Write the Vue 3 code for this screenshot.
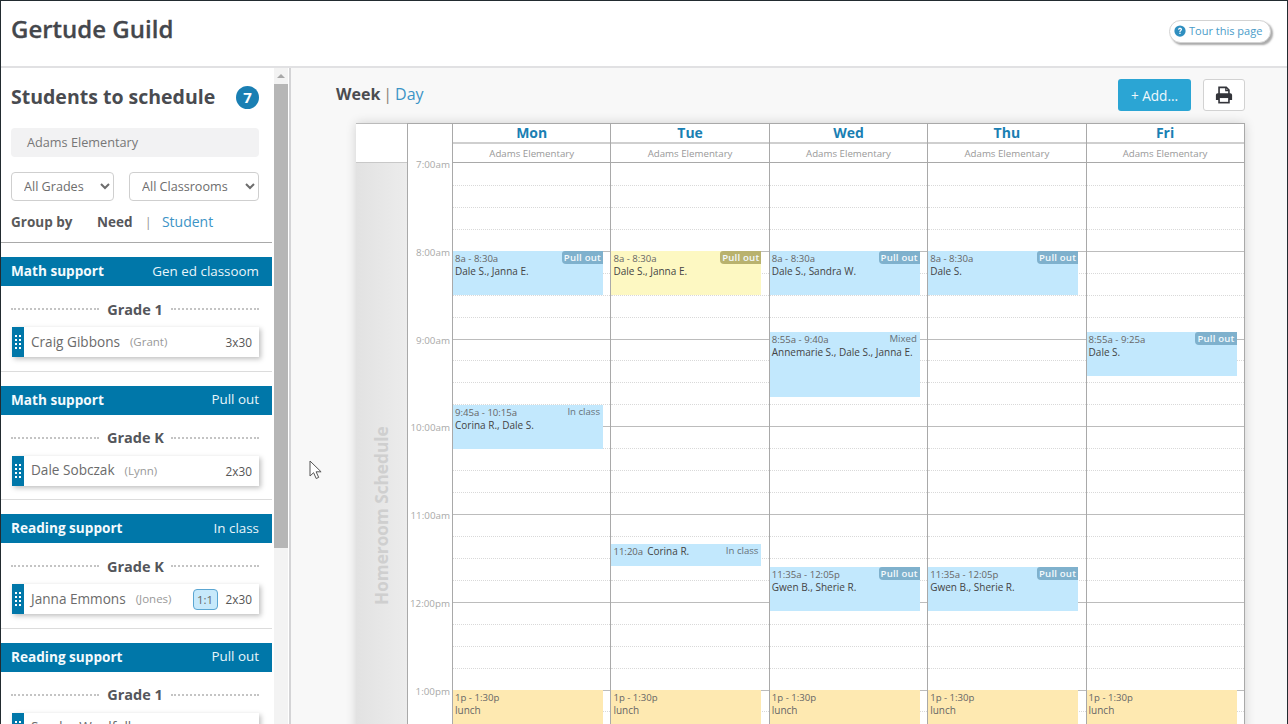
<template>
  <div class="page">
    <header class="top-bar">
      <h1 class="org-name">Gertude Guild</h1>
      <button class="tour-btn">
        <svg class="tour-icon" viewBox="0 0 16 16">
          <circle cx="8" cy="8" r="7.5" fill="#2f8fc0" />
          <path d="M5.4 6.2c0-1.5 1.2-2.4 2.7-2.4s2.6.9 2.6 2.2c0 1.9-2 1.9-2 3.2H7.1c0-2 1.9-2 1.9-3.1 0-.5-.4-.8-1-.8-.7 0-1 .4-1.1 1z" fill="#fff" />
          <rect x="7.1" y="10.2" width="1.7" height="1.8" fill="#fff" />
        </svg>
        Tour this page
      </button>
    </header>

    <div class="content">
      <aside class="sidebar">
        <div class="side-scroll">
          <div class="side-title-row">
            <h2 class="side-title">Students to schedule</h2>
            <span class="count-badge">7</span>
          </div>
          <div class="school-field">Adams Elementary</div>
          <div class="filters">
            <select class="filter grades"><option>All Grades</option></select>
            <select class="filter rooms"><option>All Classrooms</option></select>
          </div>
          <div class="group-by">
            <span class="group-label">Group by</span>
            <span class="group-on">Need</span>
            <span class="group-sep">|</span>
            <a class="group-link">Student</a>
          </div>

          <section v-for="g in groups" :key="g.need + g.place" class="need-group">
            <div class="need-head">
              <strong>{{ g.need }}</strong>
              <span>{{ g.place }}</span>
            </div>
            <div class="grade-row"><span>{{ g.grade }}</span></div>
            <div class="student-card">
              <div class="handle"><i v-for="n in 8" :key="n"></i></div>
              <span class="student-name">{{ g.name }}</span>
              <span class="student-teacher">({{ g.teacher }})</span>
              <span v-if="g.ratio" class="ratio">{{ g.ratio }}</span>
              <span class="student-time">{{ g.time }}</span>
            </div>
          </section>
        </div>
        <div class="scrollbar">
          <div class="scroll-arrow"></div>
          <div class="scroll-thumb"></div>
        </div>
      </aside>

      <main class="main">
        <div class="toolbar">
          <div class="view-switch">
            <strong>Week</strong>
            <span class="view-sep">|</span>
            <a>Day</a>
          </div>
          <div class="actions">
            <button class="add-btn">+ Add...</button>
            <button class="print-btn">
              <svg viewBox="0 0 20 20" width="18" height="18">
                <path d="M4.5 9V1.5h8l3 3V9" fill="#fff" stroke="#33343a" stroke-width="1.8" />
                <path d="M12 1.5V5h3.5" fill="none" stroke="#33343a" stroke-width="1.4" />
                <path d="M3 8h14a2 2 0 0 1 2 2v5.5h-3.5v-2h-11v2H1V10a2 2 0 0 1 2-2z" fill="#33343a" />
                <rect x="4.5" y="12.5" width="11" height="6" fill="#fff" stroke="#33343a" stroke-width="1.8" />
              </svg>
            </button>
          </div>
        </div>

        <div class="calendar">
          <div class="homeroom">
            <div class="homeroom-top"></div>
            <div class="homeroom-body"><span>Homeroom Schedule</span></div>
          </div>
          <div class="time-col">
            <div class="time-head"></div>
            <div v-for="t in hours" :key="t" class="time-cell"><span>{{ t }}</span></div>
          </div>
          <div v-for="d in days" :key="d.name" class="day-col">
            <div class="day-name">{{ d.name }}</div>
            <div class="day-school">Adams Elementary</div>
            <div class="day-grid">
              <div v-for="n in quarterCount" :key="n" class="quarter" :class="{ hour: n % 4 === 1 && n > 1 }"></div>
              <div
                v-for="e in d.events"
                :key="e.time"
                class="event"
                :class="e.color"
                :style="{ top: e.top + 'px', height: e.height + 'px' }"
              >
                <span v-if="e.tag" class="tag" :class="{ plain: e.plain }">{{ e.tag }}</span>
                <div class="event-time">{{ e.time }}<span v-if="e.inlineNames" class="inline-names">{{ e.inlineNames }}</span></div>
                <div v-if="e.names" class="event-names">{{ e.names }}</div>
              </div>
            </div>
          </div>
        </div>
      </main>
    </div>

    <svg class="cursor" viewBox="0 0 14 20" width="14" height="20">
      <path d="M1 1v15l3.6-3.3 2.6 5.8 2.5-1.1-2.6-5.6h5z" fill="#fff" stroke="#555" stroke-width="1" />
    </svg>
  </div>
</template>

<script setup>
const groups = [
  { need: 'Math support', place: 'Gen ed classoom', grade: 'Grade 1', name: 'Craig Gibbons', teacher: 'Grant', time: '3x30' },
  { need: 'Math support', place: 'Pull out', grade: 'Grade K', name: 'Dale Sobczak', teacher: 'Lynn', time: '2x30' },
  { need: 'Reading support', place: 'In class', grade: 'Grade K', name: 'Janna Emmons', teacher: 'Jones', ratio: '1:1', time: '2x30' },
  { need: 'Reading support', place: 'Pull out', grade: 'Grade 1', name: 'Sandra Woolfolk', teacher: 'Grant', time: '2x30' }
]

const hours = ['7:00am', '8:00am', '9:00am', '10:00am', '11:00am', '12:00pm', '1:00pm']
const quarterCount = 28

const lunch = { time: '1p - 1:30p', names: 'lunch', color: 'orange', top: 527, height: 44 }

const days = [
  {
    name: 'Mon',
    events: [
      { time: '8a - 8:30a', names: 'Dale S., Janna E.', tag: 'Pull out', color: 'blue', top: 88, height: 44 },
      { time: '9:45a - 10:15a', names: 'Corina R., Dale S.', tag: 'In class', plain: true, color: 'blue', top: 242, height: 44 },
      lunch
    ]
  },
  {
    name: 'Tue',
    events: [
      { time: '8a - 8:30a', names: 'Dale S., Janna E.', tag: 'Pull out', color: 'yellow', top: 88, height: 44 },
      { time: '11:20a', inlineNames: 'Corina R.', tag: 'In class', plain: true, color: 'blue', top: 381, height: 22 },
      lunch
    ]
  },
  {
    name: 'Wed',
    events: [
      { time: '8a - 8:30a', names: 'Dale S., Sandra W.', tag: 'Pull out', color: 'blue', top: 88, height: 44 },
      { time: '8:55a - 9:40a', names: 'Annemarie S., Dale S., Janna E.', tag: 'Mixed', plain: true, color: 'blue', top: 169, height: 65 },
      { time: '11:35a - 12:05p', names: 'Gwen B., Sherie R.', tag: 'Pull out', color: 'blue', top: 404, height: 44 },
      lunch
    ]
  },
  {
    name: 'Thu',
    events: [
      { time: '8a - 8:30a', names: 'Dale S.', tag: 'Pull out', color: 'blue', top: 88, height: 44 },
      { time: '11:35a - 12:05p', names: 'Gwen B., Sherie R.', tag: 'Pull out', color: 'blue', top: 404, height: 44 },
      lunch
    ]
  },
  {
    name: 'Fri',
    events: [
      { time: '8:55a - 9:25a', names: 'Dale S.', tag: 'Pull out', color: 'blue', top: 169, height: 44 },
      lunch
    ]
  }
]
</script>

<style>
html, body { margin: 0; overflow: hidden; }
</style>

<style scoped>
.page {
  height: 724px;
  box-sizing: border-box;
  border: 1px solid #222b30;
  border-bottom: none;
  display: flex;
  flex-direction: column;
  overflow: hidden;
  position: relative;
  background: #fff;
  font-family: "Open Sans", "Noto Sans", sans-serif;
  color: #555;
}

/* top bar */
.top-bar {
  height: 65px;
  flex: none;
  display: flex;
  justify-content: space-between;
  align-items: flex-start;
  padding: 0 16px 0 10px;
  border-bottom: 2px solid #e1e1e3;
}
.org-name { margin: 12px 0 0; font-size: 24px; line-height: 32px; font-weight: 600; color: #44474c; -webkit-text-stroke: 0.3px #44474c; }
.tour-btn {
  margin-top: 19px;
  height: 23px;
  width: 102px;
  box-sizing: border-box;
  padding: 0 0 2px 4px;
  display: flex;
  align-items: center;
  gap: 3px;
  background: #fff;
  border: 1px solid #d3d3d3;
  border-radius: 12px;
  box-shadow: 2px 2px 2px #aaa;
  font: 11px "Open Sans", sans-serif;
  color: #4a9cc9;
}
.tour-icon { width: 12px; height: 12px; flex: none; }

.content { flex: 1; min-height: 0; display: flex; }

/* sidebar */
.sidebar { width: 288px; flex: none; display: flex; border-right: 2px solid #d4d4d6; background: #fff; }
.side-scroll { width: 271px; flex: none; overflow: hidden; }
.scrollbar { width: 14px; margin-left: 2px; background: #f3f3f3; }
.scroll-arrow {
  width: 0;
  height: 0;
  margin: 6px auto 6px;
  border-left: 4px solid transparent;
  border-right: 4px solid transparent;
  border-bottom: 4px solid #a8a8a8;
}
.scroll-thumb { height: 464px; background: #b6b6b6; }

.side-title-row { display: flex; align-items: center; justify-content: space-between; padding: 17px 13px 0 10px; }
.side-title { margin: 0; font-size: 19.5px; line-height: 24px; font-weight: 700; color: #494b50; }
.count-badge {
  width: 23px;
  height: 23px;
  border-radius: 50%;
  background: #1a7fb3;
  color: #fff;
  font-size: 15px;
  font-weight: 700;
  line-height: 23px;
  text-align: center;
}
.school-field {
  margin: 19px 13px 0 10px;
  height: 29px;
  line-height: 29px;
  padding-left: 16px;
  background: #f2f2f3;
  border-radius: 4px;
  font-size: 12.7px;
  color: #777;
}
.filters { display: flex; justify-content: space-between; margin: 15px 13px 0 10px; }
.filter {
  height: 29px;
  box-sizing: border-box;
  border: 1px solid #cfcfcf;
  border-radius: 4px;
  background: #fff;
  padding-left: 8px;
  font: 12.6px "Open Sans", sans-serif;
  color: #6d6d6d;
}
.grades { width: 103px; }
.rooms { width: 130px; }
.group-by {
  display: flex;
  align-items: center;
  height: 41px;
  padding-left: 10px;
  border-bottom: 1px solid #a9a9a9;
  font-size: 13.5px;
  line-height: 18px;
}
.group-label { width: 86px; font-size: 13.5px; font-weight: 700; color: #5a5a5a; }
.group-on { font-weight: 700; color: #55565a; }
.group-sep { margin: 0 10px 0 12px; color: #999; }
.group-link { font-size: 14px; color: #3c94c6; }

.need-group { margin-top: 14px; border-bottom: 1px solid #dcdcdc; height: 114.67px; box-sizing: border-box; }
.need-head {
  height: 29px;
  box-sizing: border-box;
  display: flex;
  align-items: center;
  justify-content: space-between;
  padding: 0 13px 2px 10px;
  background: #0077a9;
  color: #e9f5fa;
  font-size: 13.4px;
}
.need-head strong { font-size: 13.6px; font-weight: 700; color: #f3fafd; }
.grade-row {
  display: flex;
  align-items: center;
  gap: 8px;
  margin: 13px 13px 0 10px;
  height: 20px;
  font-size: 14.5px;
  font-weight: 700;
  color: #54565b;
}
.grade-row::before, .grade-row::after { content: ""; flex: 1; border-top: 2px dotted #c4c4c4; }
.grade-row span { width: 56px; text-align: center; white-space: nowrap; }
.student-card {
  margin: 8px 13px 0 11px;
  height: 30px;
  display: flex;
  align-items: center;
  background: #fff;
  box-shadow: 2px 2px 5px rgba(0, 0, 0, 0.25);
  padding-right: 7px;
}
.handle {
  width: 12px;
  height: 100%;
  background: #0077a9;
  display: grid;
  grid-template-columns: repeat(2, 2px);
  grid-auto-rows: 2px;
  gap: 2px;
  justify-content: center;
  align-content: center;
  margin-right: 7px;
}
.handle i { background: #fff; }
.student-name { font-size: 13.6px; color: #6b6b6b; margin-top: -2px; }
.student-teacher { margin: -1px 0 0 10px; font-size: 11.5px; color: #999; }
.ratio {
  margin-left: auto;
  width: 25px;
  height: 21px;
  box-sizing: border-box;
  border: 1px solid #5ba6d2;
  border-radius: 4px;
  background: #c7e9fb;
  font-size: 11.5px;
  line-height: 19px;
  text-align: center;
  color: #666;
}
.student-time { margin-left: auto; font-size: 11.8px; color: #555; }
.ratio + .student-time { margin-left: 8px; }

/* main */
.main { flex: 1; min-width: 0; background: #f8f8f8; padding: 11px 42px 0 45px; overflow: hidden; }
.toolbar { display: flex; align-items: center; justify-content: space-between; height: 32px; }
.view-switch { font-size: 16px; color: #3c94c6; margin-top: -3px; }
.view-switch strong { font-weight: 700; color: #4b4c50; }
.view-sep { margin: 0 3px; color: #8c8272; }
.actions { display: flex; gap: 12px; }
.add-btn {
  width: 73px;
  height: 32px;
  border: none;
  border-radius: 3px;
  background: #2ba5d4;
  color: #eef8fc;
  font: 13.6px "Open Sans", sans-serif;
}
.print-btn {
  width: 42px;
  height: 32px;
  padding: 0;
  display: flex;
  align-items: center;
  justify-content: center;
  background: #fff;
  border: 1px solid #d2d2d2;
  border-radius: 3px;
}

/* calendar */
.calendar { display: flex; margin: 12px 0 0 20px; box-shadow: 0 0 10px rgba(0, 0, 0, 0.16); }
.homeroom { width: 51px; flex: none; display: flex; flex-direction: column; }
.homeroom-top { height: 38px; flex: none; background: #fff; border-top: 1px solid #bbb; border-bottom: 1px solid #c8c8c8; }
.homeroom-body {
  flex: 1;
  background: linear-gradient(90deg, #e2e2e2, #ececec);
  display: flex;
  justify-content: center;
  padding-top: 264px;
}
.homeroom-body span {
  height: 178px;
  writing-mode: vertical-rl;
  transform: rotate(180deg);
  font-size: 17.2px;
  line-height: 20px;
  font-weight: 700;
  white-space: nowrap;
  text-align: left;
  color: #cfcfcf;
}
.time-col { width: 44px; flex: none; background: #fff; border-left: 1px solid #a9a9a9; }
.time-head { height: 39px; border-top: 1px solid #a9a9a9; }
.time-cell { height: 87.75px; text-align: right; padding-right: 2px; box-sizing: border-box; }
.time-cell span { display: block; transform: translateY(-5px); font-size: 9.8px; line-height: 14px; color: #a9a9a9; }
.day-col { width: 158.4px; flex: none; box-sizing: border-box; border-left: 1px solid #a9a9a9; background: #fff; }
.day-col:last-child { border-right: 1px solid #a9a9a9; width: 159px; }
.day-name {
  height: 18px;
  border-top: 1px solid #a9a9a9;
  border-bottom: 2px solid #cfcfcf;
  text-align: center;
  font-size: 14px;
  line-height: 18px;
  font-weight: 700;
  color: #1a7fb3;
}
.day-school {
  height: 18px;
  border-bottom: 1px solid #a9a9a9;
  text-align: center;
  font-size: 9.7px;
  line-height: 20px;
  color: #999;
}
.day-grid { position: relative; }
.quarter { height: 21.94px; box-sizing: border-box; border-top: 1px dotted #d9d9d9; }
.quarter:first-child { border-top: none; }
.quarter.hour { border-top: 1px solid #bcbcbc; }

.event {
  position: absolute;
  left: 0;
  width: 150px;
  box-sizing: border-box;
  padding: 1px 2px;
  font-size: 9.6px;
  line-height: 13px;
  color: #5d6468;
}
.event.blue { background: #c2e8fd; }
.event.yellow { background: #fdf8c2; }
.event.orange { background: #fee9b1; }
.event-time { color: #666; }
.event-names { font-size: 10px; color: #444; }
.orange .event-names { color: #666; }
.inline-names { margin-left: 4px; font-size: 10px; color: #444; }
.tag {
  float: right;
  margin: -1px -2px 0 0;
  padding: 0 2px;
  height: 13px;
  line-height: 14px;
  border-radius: 3px 0 0 4px;
  background: #7fb1cd;
  color: #f3f9fc;
  font-weight: 600;
  letter-spacing: 0.2px;
}
.yellow .tag { background: #b9b26e; }
.tag.plain { background: none; color: #66727a; font-weight: 400; letter-spacing: 0; margin-right: 1px; padding-right: 0; }

.cursor { position: absolute; left: 308px; top: 459px; }
</style>
